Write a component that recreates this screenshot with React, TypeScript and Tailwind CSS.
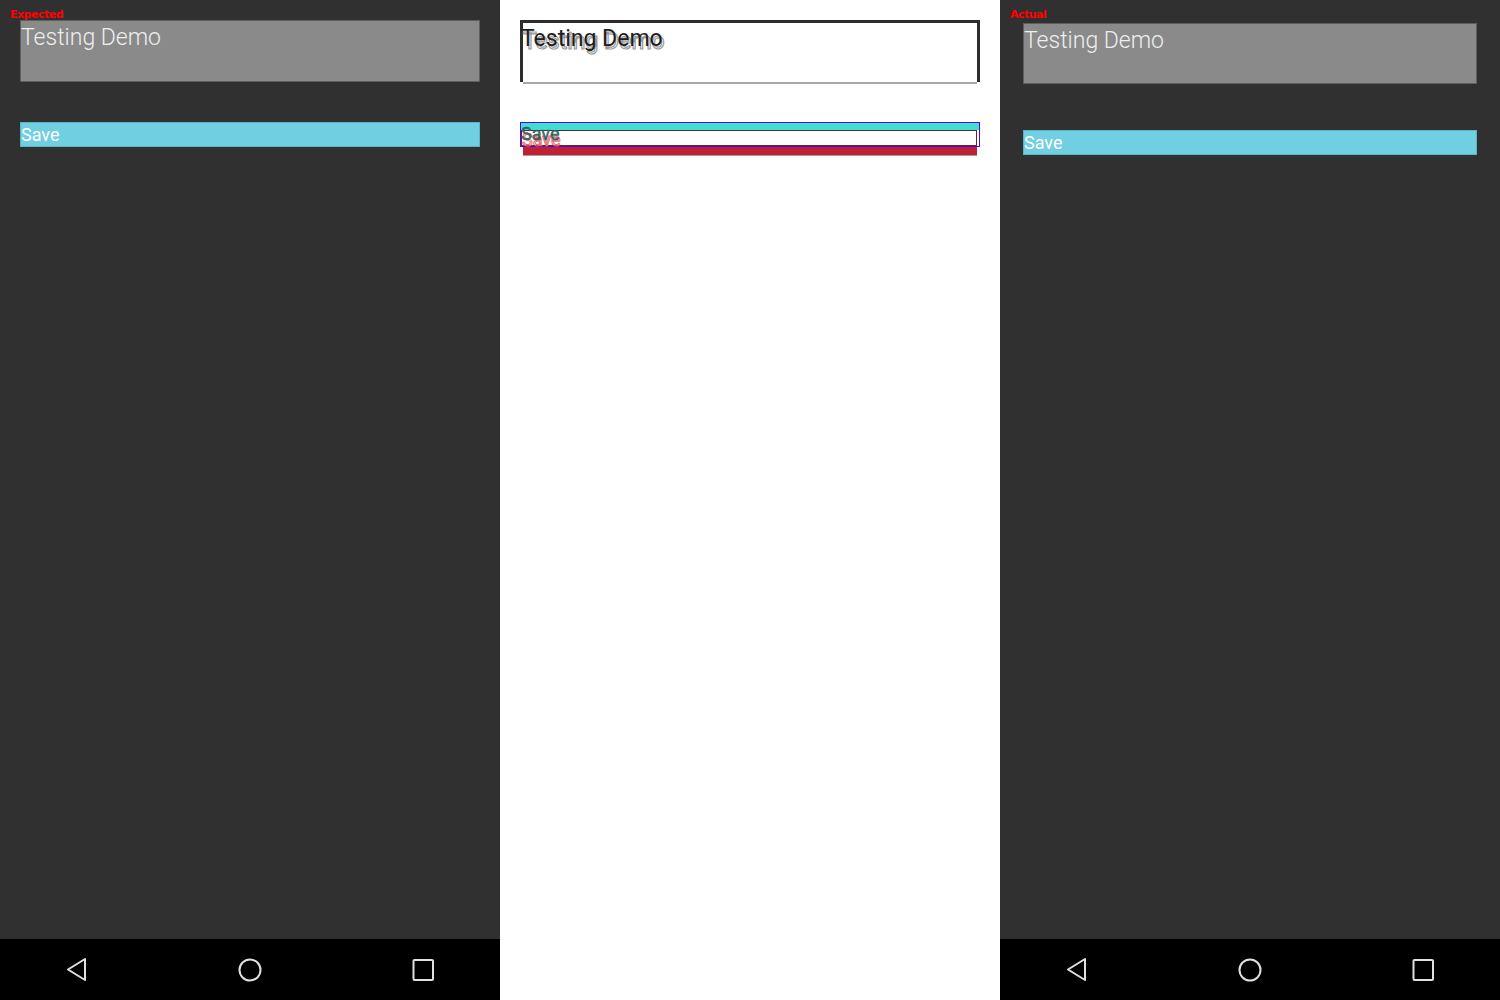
import React from "react";

const font = { fontFamily: "Roboto, 'Liberation Sans', sans-serif" };

function NavBar() {
  return (
    <div className="h-[61px] bg-black flex items-center justify-between px-[65px]">
      <svg width="24" height="26" viewBox="0 0 24 26" fill="none" stroke="#e0e0e0" strokeWidth="2" strokeLinejoin="round">
        <path d="M20 2 L3 12.5 L20 23 Z" />
      </svg>
      <svg width="26" height="26" viewBox="0 0 26 26" fill="none" stroke="#e0e0e0" strokeWidth="2">
        <circle cx="13" cy="13" r="10.5" />
      </svg>
      <svg width="24" height="24" viewBox="0 0 24 24" fill="none" stroke="#e0e0e0" strokeWidth="2">
        <rect x="2.5" y="2" width="19.5" height="20" rx="1" />
      </svg>
    </div>
  );
}

function DevicePanel({ label, offset }: { label: string; offset: "expected" | "actual" }) {
  const isActual = offset === "actual";
  return (
    <div className="relative w-[500px] h-[1000px] bg-[#303030] flex flex-col">
      <span
        className="absolute left-[10px] top-[8px] text-[11px] font-bold text-[#ff0000] leading-[14px]"
        style={{ fontFamily: "'DejaVu Sans', sans-serif", letterSpacing: "-0.5px" }}
      >
        {label}
      </span>
      <div className={`flex-1 flex flex-col ${isActual ? "pt-[23px] px-[23px]" : "pt-[20px] px-[20px]"}`}>
        <div
          className={`border border-[#5e5e5e] bg-[#8a8a8a] ${isActual ? "h-[61px]" : "h-[62px]"}`}
        >
          <p className="pt-[3px] text-[23px] leading-[28px] font-light text-[#eeeeee]" style={font}>
            Testing Demo
          </p>
        </div>
        <div
          className={`h-[25px] bg-[#70cfe0] border border-[#5ab4c4] ${isActual ? "mt-[46px]" : "mt-[40px]"}`}
        >
          <p className="pt-[1px] text-[18px] leading-[22px] text-white" style={font}>
            Save
          </p>
        </div>
      </div>
      <NavBar />
    </div>
  );
}

function DiffPanel() {
  return (
    <div className="w-[500px] h-[1000px] bg-white flex flex-col pt-[20px] px-[20px]">
      <div className="relative h-[64px]">
        <div className="h-[62px] border-t-[3px] border-l-[3px] border-r-[3px] border-[#2d2d2d]" />
        <div className="ml-[3px] mr-[3px] h-[2px] bg-[#a8a8a8]" />
        <span
          className="absolute left-[3px] top-[8px] text-[23px] leading-[28px] text-white"
          style={{ ...font, WebkitTextStroke: "1.2px #9a9a9a" }}
        >
          Testing Demo
        </span>
        <span
          className="absolute left-[1px] top-[5px] text-[23px] leading-[28px] text-[#1e1e1e]"
          style={font}
        >
          Testing Demo
        </span>
      </div>
      <div className="relative mt-[38px]">
        <div className="h-[25px] border border-[#5a00ee]">
          <div className="h-[7px] bg-[#40e0d0]" />
          <div className="h-[16px] mr-[2px] border border-[#5a2a2a] bg-white" />
        </div>
        <div className="ml-[3px] mr-[3px] h-[8px] bg-[#c02030]" />
        <div className="ml-[3px] mr-[3px] h-[1px] bg-[#9aa0a8]" />
        <span
          className="absolute left-[2px] top-[7px] text-[18px] leading-[22px] text-transparent"
          style={{ ...font, WebkitTextStroke: "1px #e07070" }}
        >
          Save
        </span>
        <span
          className="absolute left-[1px] top-[1px] text-[18px] leading-[22px] text-[#2a7a7a]"
          style={{ ...font, WebkitTextStroke: "0.4px #404040" }}
        >
          Save
        </span>
      </div>
    </div>
  );
}

export default function App() {
  return (
    <div className="w-[1500px] h-[1000px] flex overflow-hidden">
      <DevicePanel label="Expected" offset="expected" />
      <DiffPanel />
      <DevicePanel label="Actual" offset="actual" />
    </div>
  );
}
